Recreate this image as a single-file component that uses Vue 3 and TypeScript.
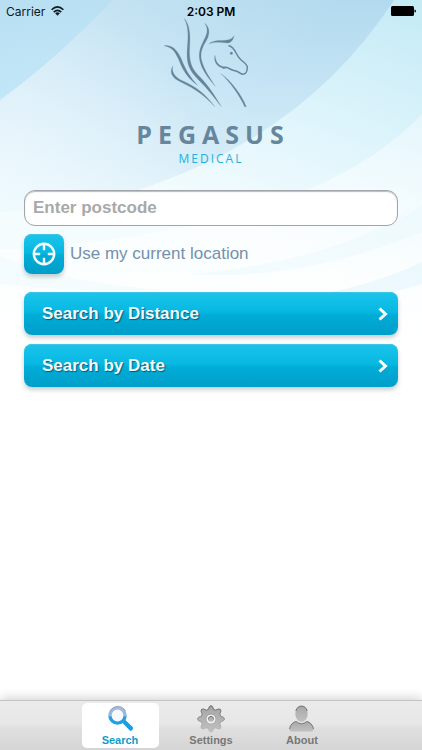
<script setup lang="ts">
import { ref } from 'vue'

type TabId = 'search' | 'settings' | 'about'

interface Tab {
  id: TabId
  label: string
}

interface SearchAction {
  id: string
  label: string
}

const tabs: Tab[] = [
  { id: 'search', label: 'Search' },
  { id: 'settings', label: 'Settings' },
  { id: 'about', label: 'About' },
]

const actions: SearchAction[] = [
  { id: 'distance', label: 'Search by Distance' },
  { id: 'date', label: 'Search by Date' },
]

const activeTab = ref<TabId>('search')
const postcode = ref('')
</script>

<template>
  <div class="screen">
    <svg class="backdrop" viewBox="0 0 422 400" preserveAspectRatio="none" aria-hidden="true">
      <defs>
        <linearGradient id="sky" x1="0" y1="0" x2="0" y2="1">
          <stop offset="0" stop-color="#b2daee" />
          <stop offset="0.2" stop-color="#c3e3f4" />
          <stop offset="0.4" stop-color="#d7edf8" />
          <stop offset="0.55" stop-color="#e8f7fc" />
          <stop offset="1" stop-color="#ffffff" />
        </linearGradient>
        <linearGradient id="corner" x1="0.2" y1="0" x2="0.35" y2="1">
          <stop offset="0" stop-color="#b8e0f2" />
          <stop offset="1" stop-color="#c3e7f9" />
        </linearGradient>
        <linearGradient id="beam" gradientUnits="userSpaceOnUse" x1="60" y1="50" x2="210" y2="170">
          <stop offset="0" stop-color="#ffffff" stop-opacity="0.24" />
          <stop offset="1" stop-color="#ffffff" stop-opacity="0" />
        </linearGradient>
        <radialGradient id="glow" gradientUnits="userSpaceOnUse" cx="0" cy="190" r="210">
          <stop offset="0" stop-color="#f2fbff" stop-opacity="0.7" />
          <stop offset="1" stop-color="#f2fbff" stop-opacity="0" />
        </radialGradient>
        <linearGradient id="sweep" gradientUnits="userSpaceOnUse" x1="400" y1="0" x2="300" y2="260">
          <stop offset="0" stop-color="#c5ebf5" />
          <stop offset="0.35" stop-color="#d6f1fa" />
          <stop offset="0.65" stop-color="#e5f7fd" />
          <stop offset="1" stop-color="#f5fcfe" />
        </linearGradient>
        <linearGradient id="haze" gradientUnits="userSpaceOnUse" x1="0" y1="114" x2="0" y2="350">
          <stop offset="0" stop-color="#ffffff" stop-opacity="0.35" />
          <stop offset="0.6" stop-color="#ffffff" stop-opacity="0.6" />
          <stop offset="1" stop-color="#ffffff" stop-opacity="1" />
        </linearGradient>
      </defs>
      <rect width="422" height="400" fill="url(#sky)" />
      <path d="M112 0H422V400H0V100Q60 56 112 0Z" fill="url(#beam)" />
      <rect width="422" height="400" fill="url(#glow)" />
      <path d="M0 0H112Q60 56 0 100Z" fill="url(#corner)" />
      <path d="M394 0H422V400H0V212Q90 208 150 186Q310 130 394 0Z" fill="url(#sweep)" />
      <path d="M422 114Q380 158 312 188Q190 240 0 250V400H422Z" fill="url(#haze)" />
      <path d="M422 206Q330 262 190 274Q300 282 422 232Z" fill="#e6f7fc" opacity="0.4" />
      <path d="M422 262Q360 292 270 302Q360 304 422 284Z" fill="#e2f5fc" opacity="0.6" />
      <path d="M0 256Q60 282 160 290Q60 292 0 284Z" fill="#ecf9fe" opacity="0.5" />
    </svg>

    <header class="status">
      <span class="carrier">
        Carrier
        <svg class="wifi" viewBox="0 0 36 28" role="img" aria-label="Wi-Fi">
          <g fill="none" stroke="#0b1a24" stroke-width="4.600">
            <path d="M1.500 10.500Q18 -5 34.500 10.500" />
            <path d="M7.500 17Q18 7 28.500 17" />
          </g>
          <path d="M11.500 20.500Q18 15 24.500 20.500L18 27.500Z" fill="#0b1a24" />
        </svg>
      </span>
      <time class="clock">2:03 PM</time>
      <svg class="battery" viewBox="0 0 25 10" role="img" aria-label="Battery full">
        <rect width="23" height="10" rx="1.500" />
        <path d="M23.500 3.500Q25 3.500 25 5T23.500 6.500Z" />
      </svg>
    </header>

    <main class="content">
      <h1 class="brand">
        <svg class="mark" viewBox="480 51 270 273" aria-hidden="true">
          <g fill="#648499" stroke="#648499" stroke-width="0.600" stroke-linejoin="round">
            <path d="M552 55C568 72 572 100 569 140C566 185 575 207 600 231C625 256 645 288 664 320C640 288 620 263 595 239C566 210 558 190 562 142C566 100 564 75 552 55Z" />
            <path d="M614 70C630 82 630 102 620 120C606 144 601 156 604 178C611 208 630 235 646 259C623 233 604 207 599 180C595 155 602 140 613 118C624 98 624 84 614 70Z" />
            <path d="M492 137C518 134 531 150 543 175C556 208 570 232 593 256C564 236 549 213 537 181C526 155 516 141 492 137Z" />
            <path d="M518 198C515 215 522 228 541 239C590 260 617 282 644 320C612 286 590 269 544 247C514 233 508 217 518 198Z" />
            <path d="M627 131C645 118 665 123 682 120C692 118 698 114 702 107C700 120 692 129 682 129C665 127 645 125 627 131Z" />
            <path d="M662 220C693 250 717 284 734 320H739C723 282 696 246 662 220Z" />
            <path d="M645 166C640 186 652 202 672 205L680 204L676 200C658 201 647 188 645 166Z" />
            <circle cx="694" cy="160" r="3.800" />
          </g>
          <path d="M687 137C706 141 706 164 721 178C731 187 742 192 742 202C742 211 738 222 730 223C721 223 719 216 708 213C694 211 690 206 680 202L670 204" fill="none" stroke="#648499" stroke-width="4.400" stroke-linecap="round" />
        </svg>
        <span class="name">PEGASUS</span>
        <span class="division">MEDICAL</span>
      </h1>

      <form class="search" @submit.prevent>
        <input
          v-model="postcode"
          class="postcode"
          type="text"
          placeholder="Enter postcode"
          aria-label="Enter postcode"
        />
        <div class="locate">
          <button id="locate" class="glossy locate-button" type="button">
            <svg class="target" viewBox="0 0 24 24" aria-hidden="true">
              <g fill="none" stroke="#f3fcff" stroke-width="2.400">
                <circle cx="12" cy="12" r="10.200" />
                <path d="M12 2V8.200M12 15.800V22M2 12H8.200M15.800 12H22" />
              </g>
            </svg>
          </button>
          <label for="locate">Use my current location</label>
        </div>
        <div class="actions">
          <button v-for="action in actions" :key="action.id" class="glossy action" type="submit">
            <span>{{ action.label }}</span>
            <svg class="chevron" viewBox="0 0 10 14" aria-hidden="true">
              <path d="M1.500 1.500L7.500 7L1.500 12.500" fill="none" stroke="#fff" stroke-width="3" />
            </svg>
          </button>
        </div>
      </form>
    </main>

    <nav class="tabs">
      <a
        v-for="tab in tabs"
        :key="tab.id"
        class="tab"
        :class="{ active: tab.id === activeTab }"
        :href="`#${tab.id}`"
        @click="activeTab = tab.id"
      >
        <svg v-if="tab.id === 'search'" class="tab-icon" viewBox="0 0 28 28" aria-hidden="true">
          <defs>
            <linearGradient id="lens" x1="0" y1="0" x2="0" y2="1">
              <stop offset="0" stop-color="#a9b9d6" />
              <stop offset="0.500" stop-color="#8db8e2" />
              <stop offset="0.600" stop-color="#2d9de0" />
              <stop offset="1" stop-color="#1ba2e6" />
            </linearGradient>
          </defs>
          <path d="M16 17.500L18.800 14.500L27 22.300Q27.600 23.500 26.200 25T23.800 25.600Z" fill="#1c9fe2" />
          <circle cx="11.500" cy="10.500" r="7.600" fill="#f6f9fd" stroke="url(#lens)" stroke-width="3.400" />
          <path d="M4 6Q7 1.300 12 1.300T19.500 6" fill="none" stroke="#7f93b4" stroke-width="0.700" />
        </svg>
        <svg v-else-if="tab.id === 'settings'" class="tab-icon" viewBox="0 0 28 28" aria-hidden="true">
          <defs>
            <linearGradient id="gear" x1="0" y1="0" x2="0" y2="1">
              <stop offset="0" stop-color="#a6a6a6" />
              <stop offset="1" stop-color="#c0c0c0" />
            </linearGradient>
            <linearGradient id="edge" x1="0" y1="0" x2="0" y2="1">
              <stop offset="0" stop-color="#555" />
              <stop offset="0.600" stop-color="#999" />
              <stop offset="1" stop-color="#c4c4c4" />
            </linearGradient>
          </defs>
          <g fill="url(#gear)" stroke="url(#edge)" stroke-width="0.900" stroke-linejoin="round">
            <path
              fill-rule="evenodd"
              d="M11.500 4.300Q12.200 0.700 14 0.700T16.500 4.300L18.700 5.200Q22 3.100 23.400 4.400T22.800 8.900L23.700 11.300Q27.500 12 27.500 14T23.700 16.700L22.800 19.100Q24.800 22.400 23.400 23.600T18.700 22.800L16.500 23.700Q15.800 27.300 14 27.300T11.500 23.700L9.300 22.800Q6 24.900 4.600 23.600T5.200 19.100L4.300 16.700Q0.500 16 0.500 14T4.300 11.300L5.200 8.900Q3.200 5.700 4.600 4.400T9.300 5.200ZM14 9.300A4.700 4.700 0 1 0 14 18.700A4.700 4.700 0 1 0 14 9.300Z"
            />
            <circle cx="14" cy="14" r="2.700" />
          </g>
          <circle cx="14" cy="14" r="3.800" fill="none" stroke="#f3f3f3" stroke-width="1.500" />
        </svg>
        <svg v-else class="tab-icon" viewBox="0 0 28 28" aria-hidden="true">
          <defs>
            <linearGradient id="person" x1="0" y1="0" x2="0" y2="1">
              <stop offset="0" stop-color="#a9a9a9" />
              <stop offset="1" stop-color="#c0c0c0" />
            </linearGradient>
          </defs>
          <ellipse cx="13.500" cy="9" rx="6.200" ry="7.900" fill="url(#person)" />
          <path d="M7.800 6Q9.200 1.100 13.500 1.100T19.200 6" fill="none" stroke="#606060" stroke-width="0.900" />
          <path d="M1.500 24Q3 17.500 8.200 16.500Q13.500 21 18.800 16.500Q24 17.500 25.500 24Q25.600 26.500 23.500 26.500H3.500Q1.400 26.500 1.500 24Z" fill="url(#person)" />
          <path d="M1.500 24Q3 17.500 8.200 16.500Q13.500 21 18.800 16.500Q24 17.500 25.500 24" fill="none" stroke="#6d6d6d" stroke-width="0.900" />
        </svg>
        <span>{{ tab.label }}</span>
      </a>
    </nav>
  </div>
</template>

<style>
body {
  margin: 0;
  background: #fff;
}
</style>

<style scoped>
.screen {
  position: relative;
  isolation: isolate;
  box-sizing: border-box;
  min-height: 100vh;
  display: flex;
  flex-direction: column;
  font-family: "Liberation Sans", Arial, sans-serif;
}

.backdrop {
  position: absolute;
  z-index: -1;
  top: 0;
  left: 0;
  width: 100%;
  height: 400px;
}

.status {
  display: grid;
  grid-template-columns: 1fr auto 1fr;
  align-items: center;
  height: 22px;
  padding: 0 6px;
  font-family: Inter, sans-serif;
  font-size: 12px;
  color: #0b1a24;
}

.carrier {
  display: flex;
  align-items: center;
  gap: 6px;
}

.wifi {
  width: 13px;
  height: 10px;
}

.clock {
  font-weight: 600;
  color: #000;
}

.battery {
  justify-self: end;
  width: 25px;
  height: 10px;
}

.content {
  flex: 1;
  padding: 0 24px 24px;
}

.brand {
  display: flex;
  flex-direction: column;
  align-items: center;
  margin: -5px 0 0;
  font-family: "Open Sans", sans-serif;
}

.mark {
  width: 90px;
  height: 91px;
  margin-right: 12px;
}

.name {
  margin-top: 11px;
  padding-left: 4px;
  font-size: 25px;
  line-height: 30px;
  font-weight: 700;
  letter-spacing: 6px;
  color: #66869d;
}

.division {
  font-size: 12px;
  line-height: 20px;
  font-weight: 500;
  letter-spacing: 2px;
  color: #1fb0dc;
}

.search {
  display: flex;
  flex-direction: column;
  margin-top: 21px;
}

.postcode {
  box-sizing: border-box;
  width: 100%;
  height: 36px;
  padding: 0 8px;
  border: 1px solid #a2a6aa;
  border-radius: 11px;
  background: #fff;
  box-shadow: inset 0 1px 1px #b9bcbf;
  font: bold 17px "Liberation Sans", Arial, sans-serif;
  color: #444;
}

.postcode::placeholder {
  color: #a9a9a9;
  opacity: 1;
}

.locate {
  display: flex;
  align-items: center;
  gap: 6px;
  margin-top: 8px;
  font-size: 17px;
  color: #7391ab;
}

.glossy {
  border: 0;
  border-radius: 8px;
  background: linear-gradient(#1cc4eb 0%, #06b8e2 47%, #00acd6 54%, #009fc9 100%);
  box-shadow: inset 0 1px 0 #3fc5e3, 0 3px 4px rgba(70, 80, 90, 0.28);
}

.locate-button {
  display: grid;
  place-items: center;
  width: 40px;
  height: 40px;
  padding: 0;
}

.target {
  width: 24px;
  height: 24px;
}

.actions {
  display: grid;
  gap: 9px;
  margin-top: 18px;
}

.action {
  display: flex;
  align-items: center;
  justify-content: space-between;
  height: 43px;
  padding: 0 10px 0 18px;
  font: bold 17px "Liberation Sans", Arial, sans-serif;
  color: #effbff;
  text-shadow: 1px 1px 1px #065a78;
}

.chevron {
  width: 10px;
  height: 14px;
}

.tabs {
  display: flex;
  justify-content: center;
  gap: 14px;
  box-sizing: border-box;
  height: 50px;
  padding: 2px 0;
  border-top: 1px solid #c3c3c3;
  background: linear-gradient(#ebebeb 0%, #e7e7e7 46%, #dfdfdf 56%, #d5d5d5 100%);
  box-shadow: 0 -2px 10px rgba(0, 0, 0, 0.18);
}

.tab {
  display: flex;
  flex-direction: column;
  align-items: center;
  width: 77px;
  border-radius: 5px;
  padding-top: 2px;
  box-sizing: border-box;
  font-size: 11px;
  line-height: 14px;
  font-weight: bold;
  color: #777;
  text-decoration: none;
}

.tab.active {
  background: #fff;
  color: #0f9dc8;
}

.tab-icon {
  width: 28px;
  height: 28px;
}
</style>
